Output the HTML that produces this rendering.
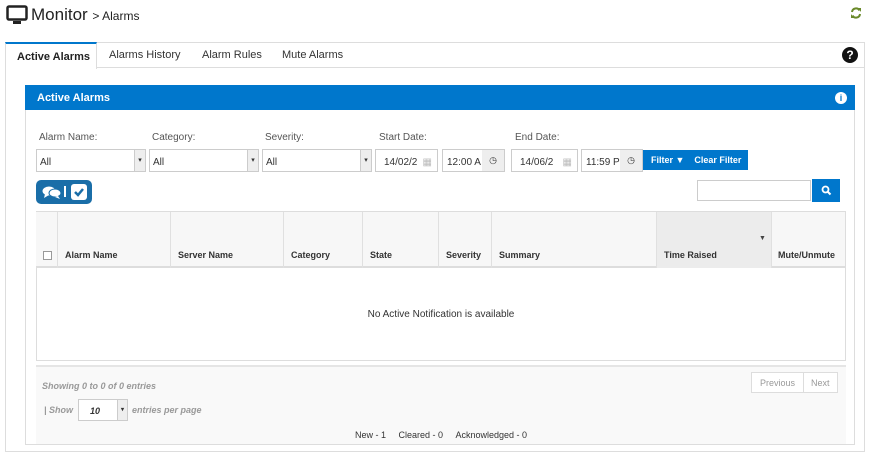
<!DOCTYPE html>
<html><head><meta charset="utf-8"><style>
*{box-sizing:border-box;margin:0;padding:0}
body{width:874px;height:456px;background:#fff;font-family:"Liberation Sans",sans-serif;position:relative;overflow:hidden;color:#333}
.a{position:absolute}
.lbl{font-size:10px;color:#555}
.sel{border:1px solid #ccc;background:#fff;font-size:10px;padding:7px 3px;height:23px}
.sel .ar{position:absolute;right:0;top:0;bottom:0;width:11px;border-left:1px solid #ccc;background:#eee;font-size:7px;text-align:center;line-height:21px}
.th{position:absolute;top:212px;height:56px;border-right:1px solid #e0e0e0;font-size:9px;font-weight:bold;color:#333;padding:38px 0 0 7px}
</style></head><body>
<svg class="a" style="left:6px;top:5px" width="22" height="20" viewBox="0 0 22 20"><rect x="1.5" y="1.5" width="19" height="13" rx="1.5" fill="none" stroke="#222" stroke-width="2.5"/><rect x="7" y="16" width="8" height="3" fill="#222"/></svg>
<div class="a" style="left:31px;top:5px;font-size:17px;color:#222">Monitor <span style="font-size:12px">&gt; Alarms</span></div>
<svg class="a" style="left:850px;top:7px" width="12" height="12" viewBox="0 0 12 12"><path d="M2 5A4 4 0 0 1 9.5 3.5" fill="none" stroke="#6a8a2a" stroke-width="2"/><path d="M10 7A4 4 0 0 1 2.5 8.5" fill="none" stroke="#6a8a2a" stroke-width="2"/><path d="M8 1L11 1L11 5Z" fill="#6a8a2a"/><path d="M4 11L1 11L1 7Z" fill="#6a8a2a"/></svg>
<div class="a" style="left:5px;top:42px;width:860px;height:410px;border:1px solid #ddd"></div>
<div class="a" style="left:5px;top:67px;width:860px;border-top:1px solid #ddd"></div>
<div class="a" style="left:5px;top:42px;width:92px;height:27px;background:#fff;border:1px solid #ddd;border-bottom:none;border-top:2px solid #0077cc;font-size:11px;font-weight:bold;padding:7px 0 0 11px;color:#222">Active Alarms</div>
<div class="a" style="left:109px;top:49px;font-size:11px;color:#333">Alarms History</div>
<div class="a" style="left:202px;top:49px;font-size:11px;color:#333">Alarm Rules</div>
<div class="a" style="left:282px;top:49px;font-size:11px;color:#333">Mute Alarms</div>
<div class="a" style="left:842px;top:47px;width:16px;height:16px;border-radius:50%;background:#111;color:#fff;font-size:12px;font-weight:bold;text-align:center;line-height:16px">?</div>
<div class="a" style="left:25px;top:85px;width:830px;height:360px;border:1px solid #ddd"></div>
<div class="a" style="left:25px;top:85px;width:830px;height:25px;background:#0077cc;color:#fff;font-size:11px;font-weight:bold;padding:7px 0 0 12px">Active Alarms</div>
<div class="a" style="left:835px;top:92px;width:12px;height:12px;border-radius:50%;background:#fff;color:#0077cc;font-size:9px;font-weight:bold;text-align:center;line-height:12px">i</div>
<div class="a lbl" style="left:39px;top:132px">Alarm Name:</div>
<div class="a lbl" style="left:152px;top:132px">Category:</div>
<div class="a lbl" style="left:265px;top:132px">Severity:</div>
<div class="a lbl" style="left:379px;top:132px">Start Date:</div>
<div class="a lbl" style="left:515px;top:132px">End Date:</div>
<div class="a sel" style="left:36px;top:149px;width:110px">All<div class="ar">▾</div></div>
<div class="a sel" style="left:149px;top:149px;width:110px">All<div class="ar">▾</div></div>
<div class="a sel" style="left:262px;top:149px;width:110px">All<div class="ar">▾</div></div>
<div class="a sel" style="left:375px;top:149px;width:63px;padding-left:8px">14/02/2<span style="position:absolute;right:5px;color:#bbb">▦</span></div>
<div class="a sel" style="left:442px;top:149px;width:63px;padding-left:4px">12:00 A<div style="position:absolute;right:0;top:0;bottom:0;width:22px;background:#eee;text-align:center;line-height:21px;font-size:9px">◷</div></div>
<div class="a sel" style="left:511px;top:149px;width:67px;padding-left:8px">14/06/2<span style="position:absolute;right:5px;color:#bbb">▦</span></div>
<div class="a sel" style="left:581px;top:149px;width:62px;padding-left:4px">11:59 P<div style="position:absolute;right:0;top:0;bottom:0;width:22px;background:#eee;text-align:center;line-height:21px;font-size:9px">◷</div></div>
<div class="a" style="left:643px;top:150px;width:105px;height:20px;background:#0077cc;color:#fff;font-size:9px;font-weight:bold;padding:5px 0 0 8px">Filter ▼ &nbsp;&nbsp;&nbsp;Clear Filter</div>
<div class="a" style="left:36px;top:180px;width:56px;height:24px;background:#1a6ea8;border-radius:5px"></div>
<svg class="a" style="left:42px;top:185px" width="20" height="15" viewBox="0 0 20 15"><ellipse cx="7" cy="6" rx="6.5" ry="4.5" fill="#fff"/><path d="M3 9L2 13L7 10Z" fill="#fff"/><ellipse cx="13" cy="8" rx="6" ry="4" fill="#fff" stroke="#1a6ea8" stroke-width="1"/><path d="M16 11L18 14L13 12Z" fill="#fff"/></svg>
<div class="a" style="left:64px;top:186px;width:2px;height:11px;background:#fff"></div>
<div class="a" style="left:71px;top:184px;width:16px;height:16px;background:#fff;border-radius:3px"></div>
<svg class="a" style="left:71px;top:184px" width="16" height="16" viewBox="0 0 16 16"><path d="M4 8L7 11L12 5" fill="none" stroke="#1a6ea8" stroke-width="2.5"/></svg>
<div class="a" style="left:697px;top:180px;width:114px;height:21px;border:1px solid #ccc"></div>
<div class="a" style="left:812px;top:179px;width:28px;height:23px;background:#0077cc"></div>
<svg class="a" style="left:821px;top:185px" width="11" height="11" viewBox="0 0 11 11"><circle cx="4.5" cy="4.5" r="3" fill="none" stroke="#fff" stroke-width="1.8"/><path d="M6.5 6.5L9.5 9.5" stroke="#fff" stroke-width="2"/></svg>
<div class="a" style="left:36px;top:211px;width:810px;height:150px;border:1px solid #ddd"></div>
<div class="a" style="left:36px;top:212px;width:809px;height:56px;background:#f7f7f7;border-bottom:2px solid #ddd"></div>
<div class="a" style="left:657px;top:212px;width:115px;height:56px;background:#ececec"></div>
<div class="th" style="left:36px;width:22px;padding-left:7px"><div style="width:9px;height:9px;border:1px solid #999;background:#fff;margin-top:1px"></div></div>
<div class="th" style="left:58px;width:113px">Alarm Name</div>
<div class="th" style="left:171px;width:113px">Server Name</div>
<div class="th" style="left:284px;width:79px">Category</div>
<div class="th" style="left:363px;width:76px">State</div>
<div class="th" style="left:439px;width:53px">Severity</div>
<div class="th" style="left:492px;width:165px">Summary</div>
<div class="th" style="left:657px;width:115px">Time Raised</div>
<div class="th" style="left:772px;width:73px;border-right:none;padding-left:6px">Mute/Unmute</div>
<div class="a" style="left:759px;top:235px;font-size:7px;color:#444">▼</div>
<div class="a" style="left:36px;top:309px;width:810px;text-align:center;font-size:10px;color:#333">No Active Notification is available</div>
<div class="a" style="left:36px;top:365px;width:810px;height:79px;background:#f9f9f9;border-top:2px solid #e5e5e5"></div>
<div class="a" style="left:42px;top:381px;font-size:9px;font-style:italic;font-weight:bold;color:#999">Showing 0 to 0 of 0 entries</div>
<div class="a" style="left:751px;top:372px;width:87px;height:21px;border:1px solid #ddd;background:#fff;font-size:9px;color:#999"><span style="position:absolute;left:8px;top:5px">Previous</span><span style="position:absolute;left:51px;top:0;height:19px;border-left:1px solid #ddd"></span><span style="position:absolute;left:59px;top:5px">Next</span></div>
<div class="a" style="left:44px;top:405px;font-size:9px;font-style:italic;font-weight:bold;color:#999">| Show</div>
<div class="a" style="left:78px;top:399px;width:50px;height:22px;border:1px solid #ccc;background:#fff;font-size:9px;font-style:italic;font-weight:bold;padding:6px 0 0 11px">10<div style="position:absolute;right:0;top:0;bottom:0;width:10px;background:#eee;border-left:1px solid #ccc;font-size:6px;line-height:20px;text-align:center;font-style:normal">▾</div></div>
<div class="a" style="left:132px;top:405px;font-size:9px;font-style:italic;font-weight:bold;color:#999">entries per page</div>
<div class="a" style="left:36px;top:430px;width:810px;text-align:center;font-size:9px;color:#333">New - 1 &nbsp;&nbsp;&nbsp;&nbsp;Cleared - 0 &nbsp;&nbsp;&nbsp;&nbsp;Acknowledged - 0</div>
</body></html>
